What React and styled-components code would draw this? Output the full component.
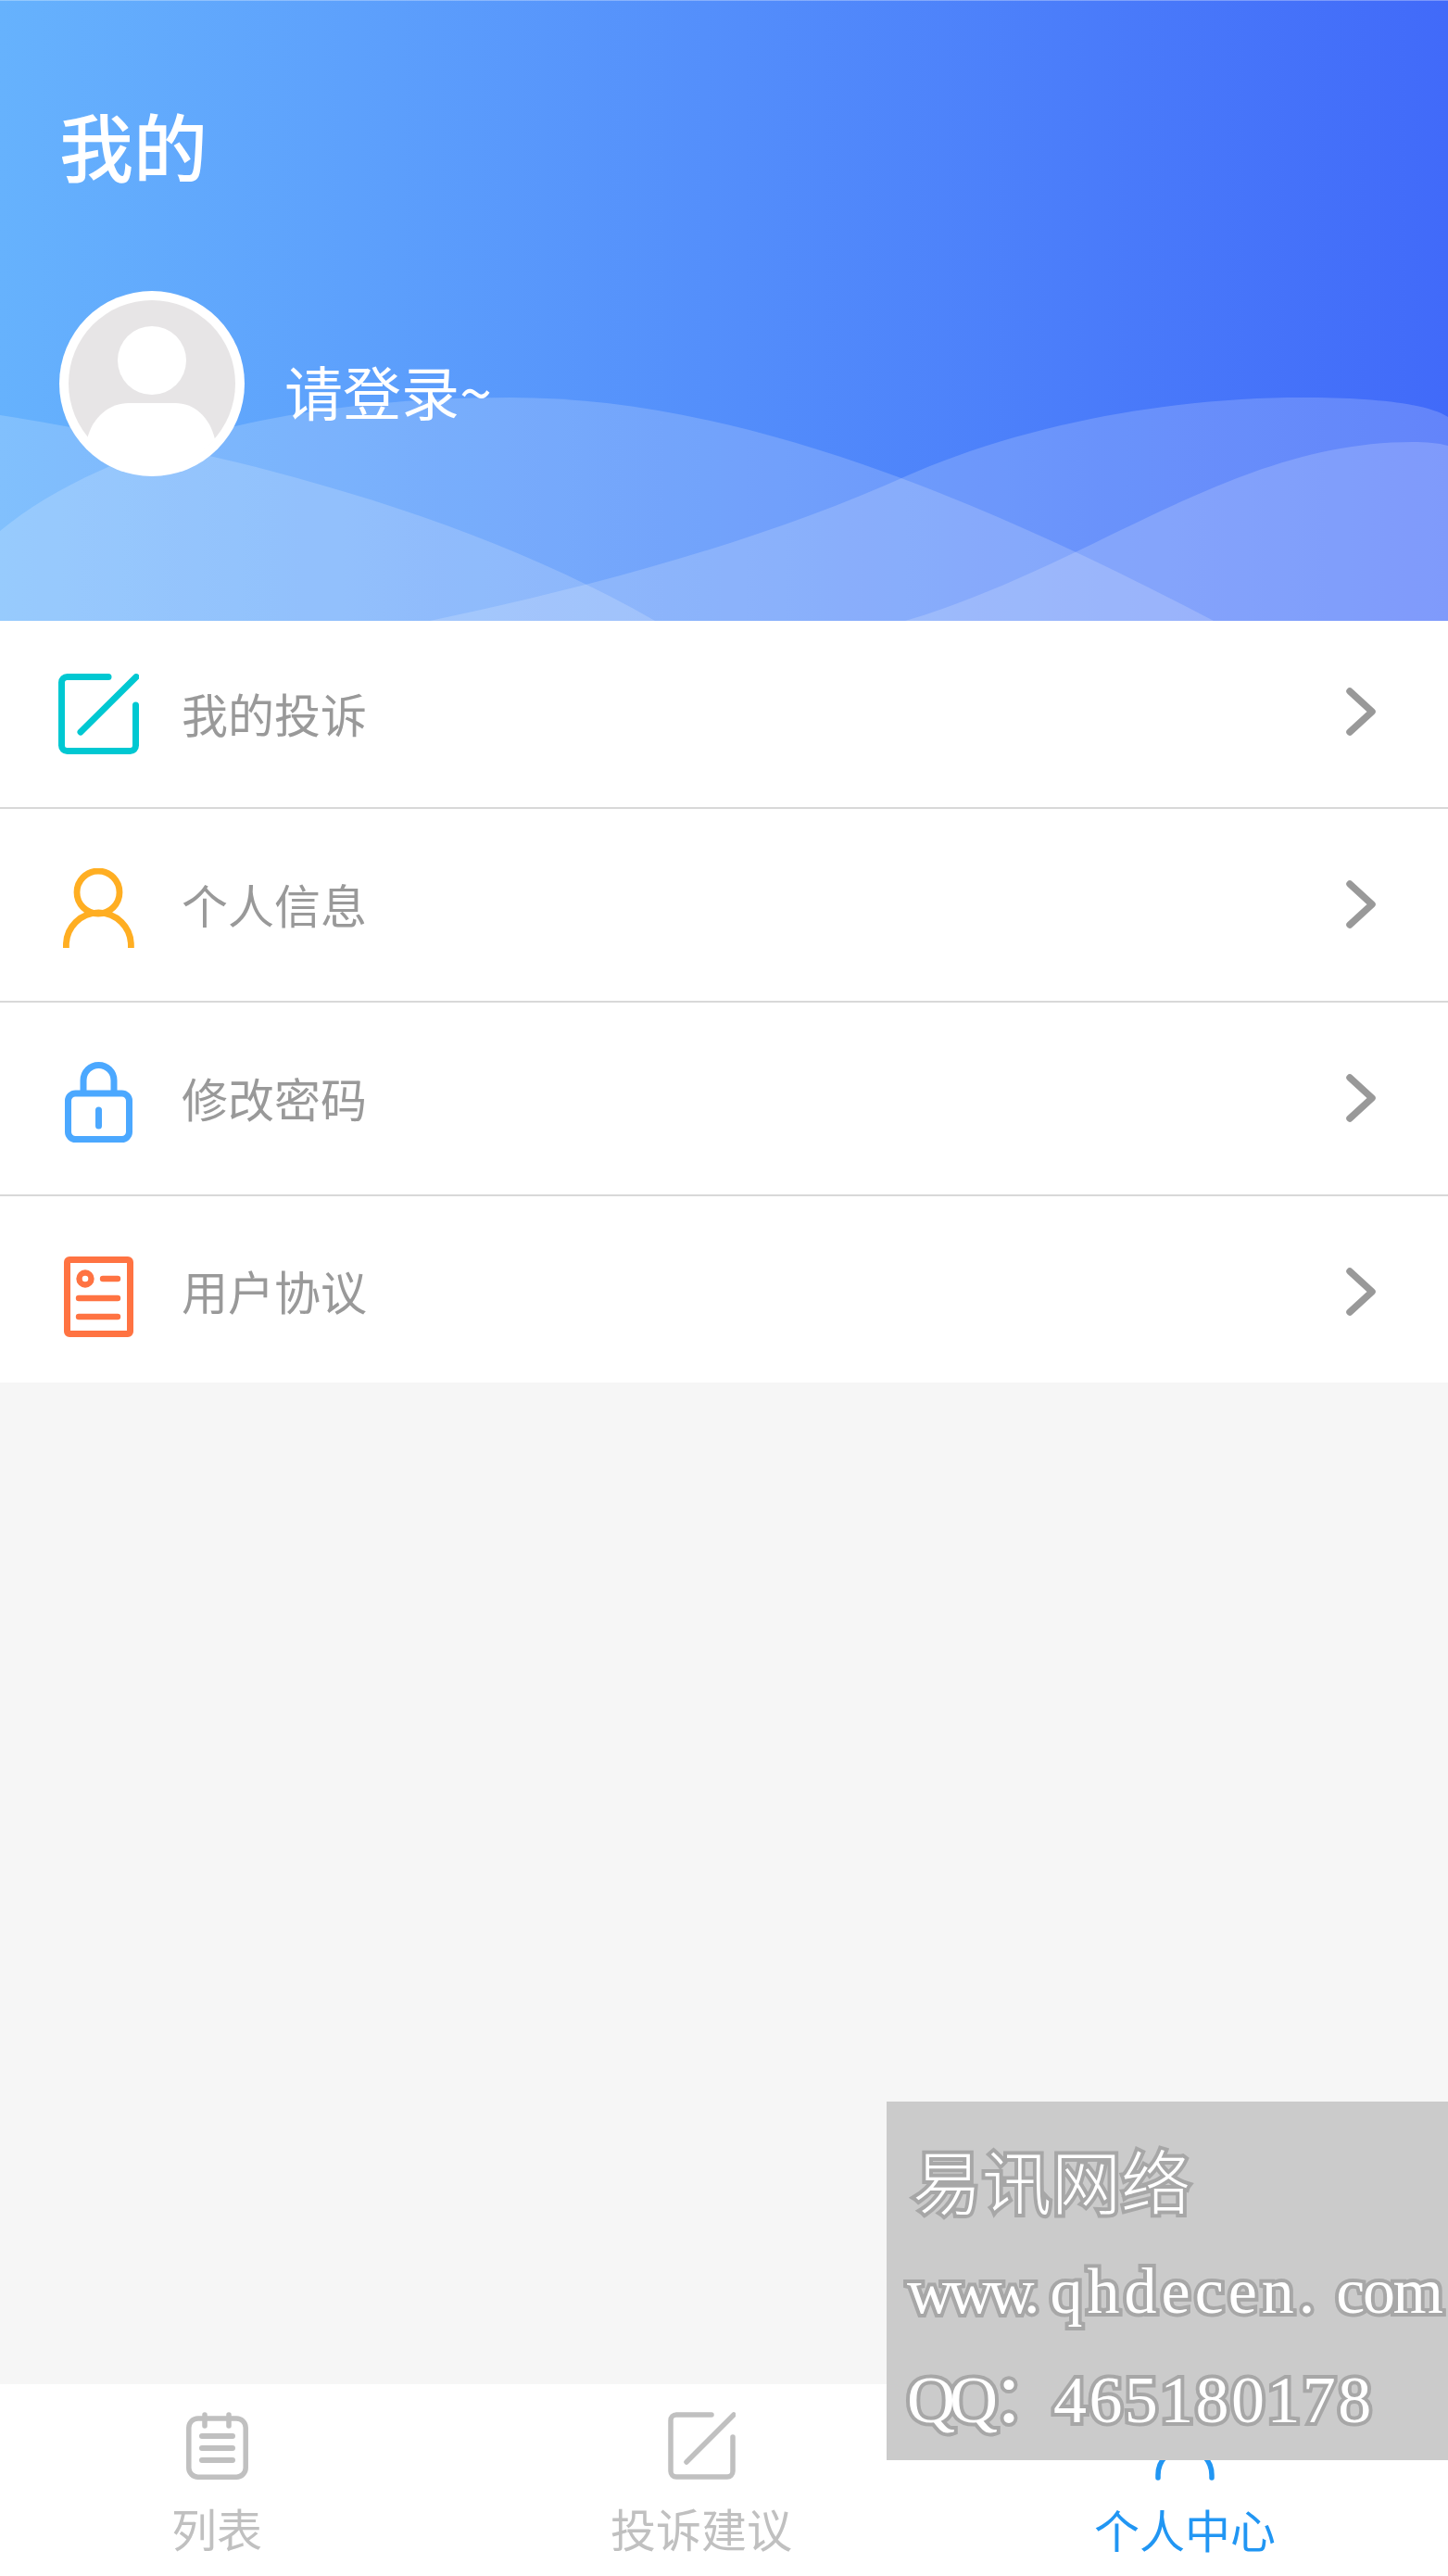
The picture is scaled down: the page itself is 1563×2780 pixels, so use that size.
import React from "react";
import styled, { createGlobalStyle } from "styled-components";

const menuItems = [
  { label: "我的投诉", icon: "edit", iconDy: 0, chevronDy: -3, labelDy: -2 },
  { label: "个人信息", icon: "user", iconDy: 3, chevronDy: -1, labelDy: -2 },
  { label: "修改密码", icon: "lock", iconDy: 4, chevronDy: -1, labelDy: -2 },
  { label: "用户协议", icon: "doc", iconDy: 8, chevronDy: 2, labelDy: 0 },
];

const EditIcon = () => (
  <svg width="87" height="87" viewBox="0 0 87 87" fill="none" stroke="#00c8d2" strokeWidth="7" strokeLinecap="round">
    <path d="M54 3.5H9.5a6 6 0 0 0-6 6v68a6 6 0 0 0 6 6h68a6 6 0 0 0 6-6V34" />
    <path d="M24 63L84 3.5" />
  </svg>
);

const UserIcon = () => (
  <svg width="77" height="86" viewBox="0 0 77 86" fill="none" stroke="#ffae22" strokeWidth="6.8">
    <circle cx="38" cy="26" r="23" />
    <path d="M3.4 86v-3a35 35 0 0 1 70 0v3" />
  </svg>
);

const LockIcon = () => (
  <svg width="73" height="87" viewBox="0 0 73 87" fill="none" stroke="#4ba8ff" strokeWidth="7">
    <rect x="3.5" y="34" width="66" height="49.5" rx="8" />
    <path d="M20 32V20a16.5 16.5 0 0 1 33 0v12" />
    <path d="M36.5 52v17" strokeLinecap="round" />
  </svg>
);

const DocIcon = () => (
  <svg width="75" height="87" viewBox="0 0 75 87" fill="none" stroke="#ff7342" strokeWidth="7">
    <rect x="3.5" y="3.5" width="68" height="80" rx="2.5" />
    <circle cx="23" cy="24" r="6.5" strokeWidth="6.4" />
    <g strokeLinecap="round" strokeWidth="6.4">
      <path d="M42 24h16" />
      <path d="M16 45h42" />
      <path d="M16 65h42" />
    </g>
  </svg>
);

const Chevron = () => (
  <svg width="32" height="52" viewBox="0 0 32 52" fill="none" stroke="#999" strokeWidth="7.5" strokeLinecap="round" strokeLinejoin="round">
    <path d="M4 4l24 22L4 48" />
  </svg>
);

const icons = { edit: EditIcon, user: UserIcon, lock: LockIcon, doc: DocIcon };

const App = () => {
  return (
    <Page>
      <GlobalStyle />
      <Header>
        <Waves viewBox="0 0 1563 670" preserveAspectRatio="none">
          <path d="M0 448C200 480 480 540 707 670H0Z" fill="#fff" fillOpacity="0.18" />
          <path d="M0 573C100 490 290 429 551 429C765 429 1005 510 1310 670H0Z" fill="#fff" fillOpacity="0.18" />
          <path d="M464 670C640 633 825 583 980 513C1120 452 1280 429 1405 429C1480 429 1540 435 1563 450V670Z" fill="#fff" fillOpacity="0.18" />
          <path d="M977 670C1180 610 1330 477 1525 477C1540 477 1552 478 1563 481V670Z" fill="#fff" fillOpacity="0.18" />
        </Waves>
        <Title>我的</Title>
        <Profile>
          <svg width="200" height="200" viewBox="0 0 200 200">
            <circle cx="100" cy="100" r="100" fill="#fff" />
            <circle cx="100" cy="100" r="90" fill="#e7e5e6" />
            <circle cx="100" cy="75" r="37" fill="#fff" />
            <path d="M30 160C36 135 55 121 75 121H125C145 121 162 135 168 160A90 90 0 0 1 30 160Z" fill="#fff" />
          </svg>
          <LoginText>请登录~</LoginText>
        </Profile>
      </Header>

      <Menu>
        {menuItems.map((item) => {
          const Icon = icons[item.icon];
          return (
            <MenuRow key={item.label}>
              <IconSlot $dy={item.iconDy}>
                <Icon />
              </IconSlot>
              <MenuLabel $dy={item.labelDy}>{item.label}</MenuLabel>
              <ChevronSlot $dy={item.chevronDy}>
                <Chevron />
              </ChevronSlot>
            </MenuRow>
          );
        })}
      </Menu>

      <Filler />

      <TabBar>
        <Tab>
          <svg width="67" height="73" viewBox="0 0 67 73" fill="none" stroke="#c0c0c0" strokeWidth="5.5" strokeLinecap="round">
            <rect x="2.8" y="7" width="61.4" height="63.2" rx="10" />
            <path d="M20 3v12M46 3v12" />
            <path d="M17 26h33M17 39h33M17 52h33" strokeWidth="6" />
          </svg>
          <TabLabel>列表</TabLabel>
        </Tab>
        <Tab>
          <svg width="73" height="73" viewBox="0 0 73 73" fill="none" stroke="#c0c0c0" strokeWidth="5.5" strokeLinecap="round">
            <path d="M47 3H9a6 6 0 0 0-6 6v55a6 6 0 0 0 6 6h55a6 6 0 0 0 6-6V27" />
            <path d="M20 54L71 3" />
          </svg>
          <TabLabel>投诉建议</TabLabel>
        </Tab>
        <Tab>
          <svg width="64" height="74" viewBox="0 0 64 74" fill="none" stroke="#2196f3" strokeWidth="5.5" strokeLinecap="round">
            <circle cx="32" cy="20" r="17" />
            <path d="M3 71v-3a29 29 0 0 1 58 0v3" />
          </svg>
          <TabLabel $active>个人中心</TabLabel>
        </Tab>
      </TabBar>

      <Watermark>
        <WatermarkTitle>易讯网络</WatermarkTitle>
        <WatermarkLine $gap={18} $size={70} $top={11}>
          <Word $spacing={-7}>www.</Word>
          <Word $spacing={5}>qhdecen.</Word>
          <Word $spacing={-2.5}>com</Word>
        </WatermarkLine>
        <WatermarkLine $gap={0} $size={72} $top={7}>
          <Word $spacing={-6}>QQ：</Word>
          <Word $spacing={2.4}>465180178</Word>
        </WatermarkLine>
      </Watermark>
    </Page>
  );
};

const GlobalStyle = createGlobalStyle`
  body {
    margin: 0;
    font-family: "Noto Sans CJK SC", "Noto Sans", sans-serif;
  }
`;

const Page = styled.div`
  position: relative;
  width: 1563px;
  height: 2780px;
  display: flex;
  flex-direction: column;
  overflow: hidden;
  background: #fff;
`;

const Header = styled.header`
  position: relative;
  height: 670px;
  flex-shrink: 0;
  box-sizing: border-box;
  padding: 101px 0 0 64px;
  background: linear-gradient(90deg, #66b2fd 0%, #416af9 100%);
  box-shadow: inset 0 1px 0 rgba(255, 255, 255, 0.3);
  color: #fff;
`;

const Waves = styled.svg`
  position: absolute;
  left: 0;
  top: 0;
  width: 100%;
  height: 100%;
`;

const Title = styled.h1`
  position: relative;
  margin: 0;
  font-size: 80px;
  line-height: 108px;
  font-weight: 500;
`;

const Profile = styled.div`
  position: relative;
  margin-top: 105px;
  display: flex;
  align-items: center;
  gap: 43px;
`;

const LoginText = styled.span`
  padding-top: 14px;
  font-size: 63px;
  line-height: 80px;
  font-weight: 400;
`;

const Menu = styled.ul`
  margin: 0;
  padding: 0;
  list-style: none;
  background: #fff;
`;

const MenuRow = styled.li`
  height: 207px;
  box-sizing: content-box;
  padding: 0 78px 0 63px;
  display: flex;
  align-items: center;
  border-bottom: 2px solid #d8d8d8;

  &:first-child {
    height: 201px;
  }

  &:last-child {
    height: 201px;
    border-bottom: none;
  }
`;

// a centred item moves by half its top margin, hence the doubling
const IconSlot = styled.div`
  width: 87px;
  display: flex;
  justify-content: center;
  margin-top: ${(props) => props.$dy * 2}px;
`;

const MenuLabel = styled.span`
  flex: 1;
  margin-left: 46px;
  margin-top: ${(props) => props.$dy * 2}px;
  font-size: 50px;
  line-height: 70px;
  color: #999;
`;

const ChevronSlot = styled.div`
  display: flex;
  margin-top: ${(props) => props.$dy * 2}px;
`;

const Filler = styled.div`
  flex: 1;
  background: #f6f6f6;
`;

const TabBar = styled.nav`
  height: 207px;
  box-sizing: border-box;
  padding-top: 30px;
  display: grid;
  grid-template-columns: 468px 578px 466px;
  background: #fff;
`;

const Tab = styled.div`
  display: flex;
  flex-direction: column;
  align-items: center;
  height: 170px;
`;

const TabLabel = styled.span`
  margin-top: 18px;
  font-size: 49px;
  line-height: 68px;
  color: ${(props) => (props.$active ? "#2196f3" : "#c0c0c0")};
`;

const Watermark = styled.div`
  position: absolute;
  left: 957px;
  top: 2268px;
  width: 606px;
  height: 387px;
  overflow: hidden;
  box-sizing: border-box;
  padding: 29px 0 0 22px;
  background: #cbcbcb;
  color: #fff;
  white-space: nowrap;
  -webkit-text-stroke: 8px #a7a7a7;
  paint-order: stroke fill;
`;

const WatermarkTitle = styled.div`
  margin-left: 6px;
  font-size: 75px;
  line-height: 110px;
  font-weight: 300;
`;

const WatermarkLine = styled.div`
  display: flex;
  gap: ${(props) => props.$gap}px;
  margin-top: ${(props) => props.$top}px;
  font-family: "Liberation Serif", "Noto Sans CJK SC", serif;
  font-size: ${(props) => props.$size}px;
  line-height: 110px;
`;

const Word = styled.span`
  letter-spacing: ${(props) => props.$spacing}px;
`;

export default App;
